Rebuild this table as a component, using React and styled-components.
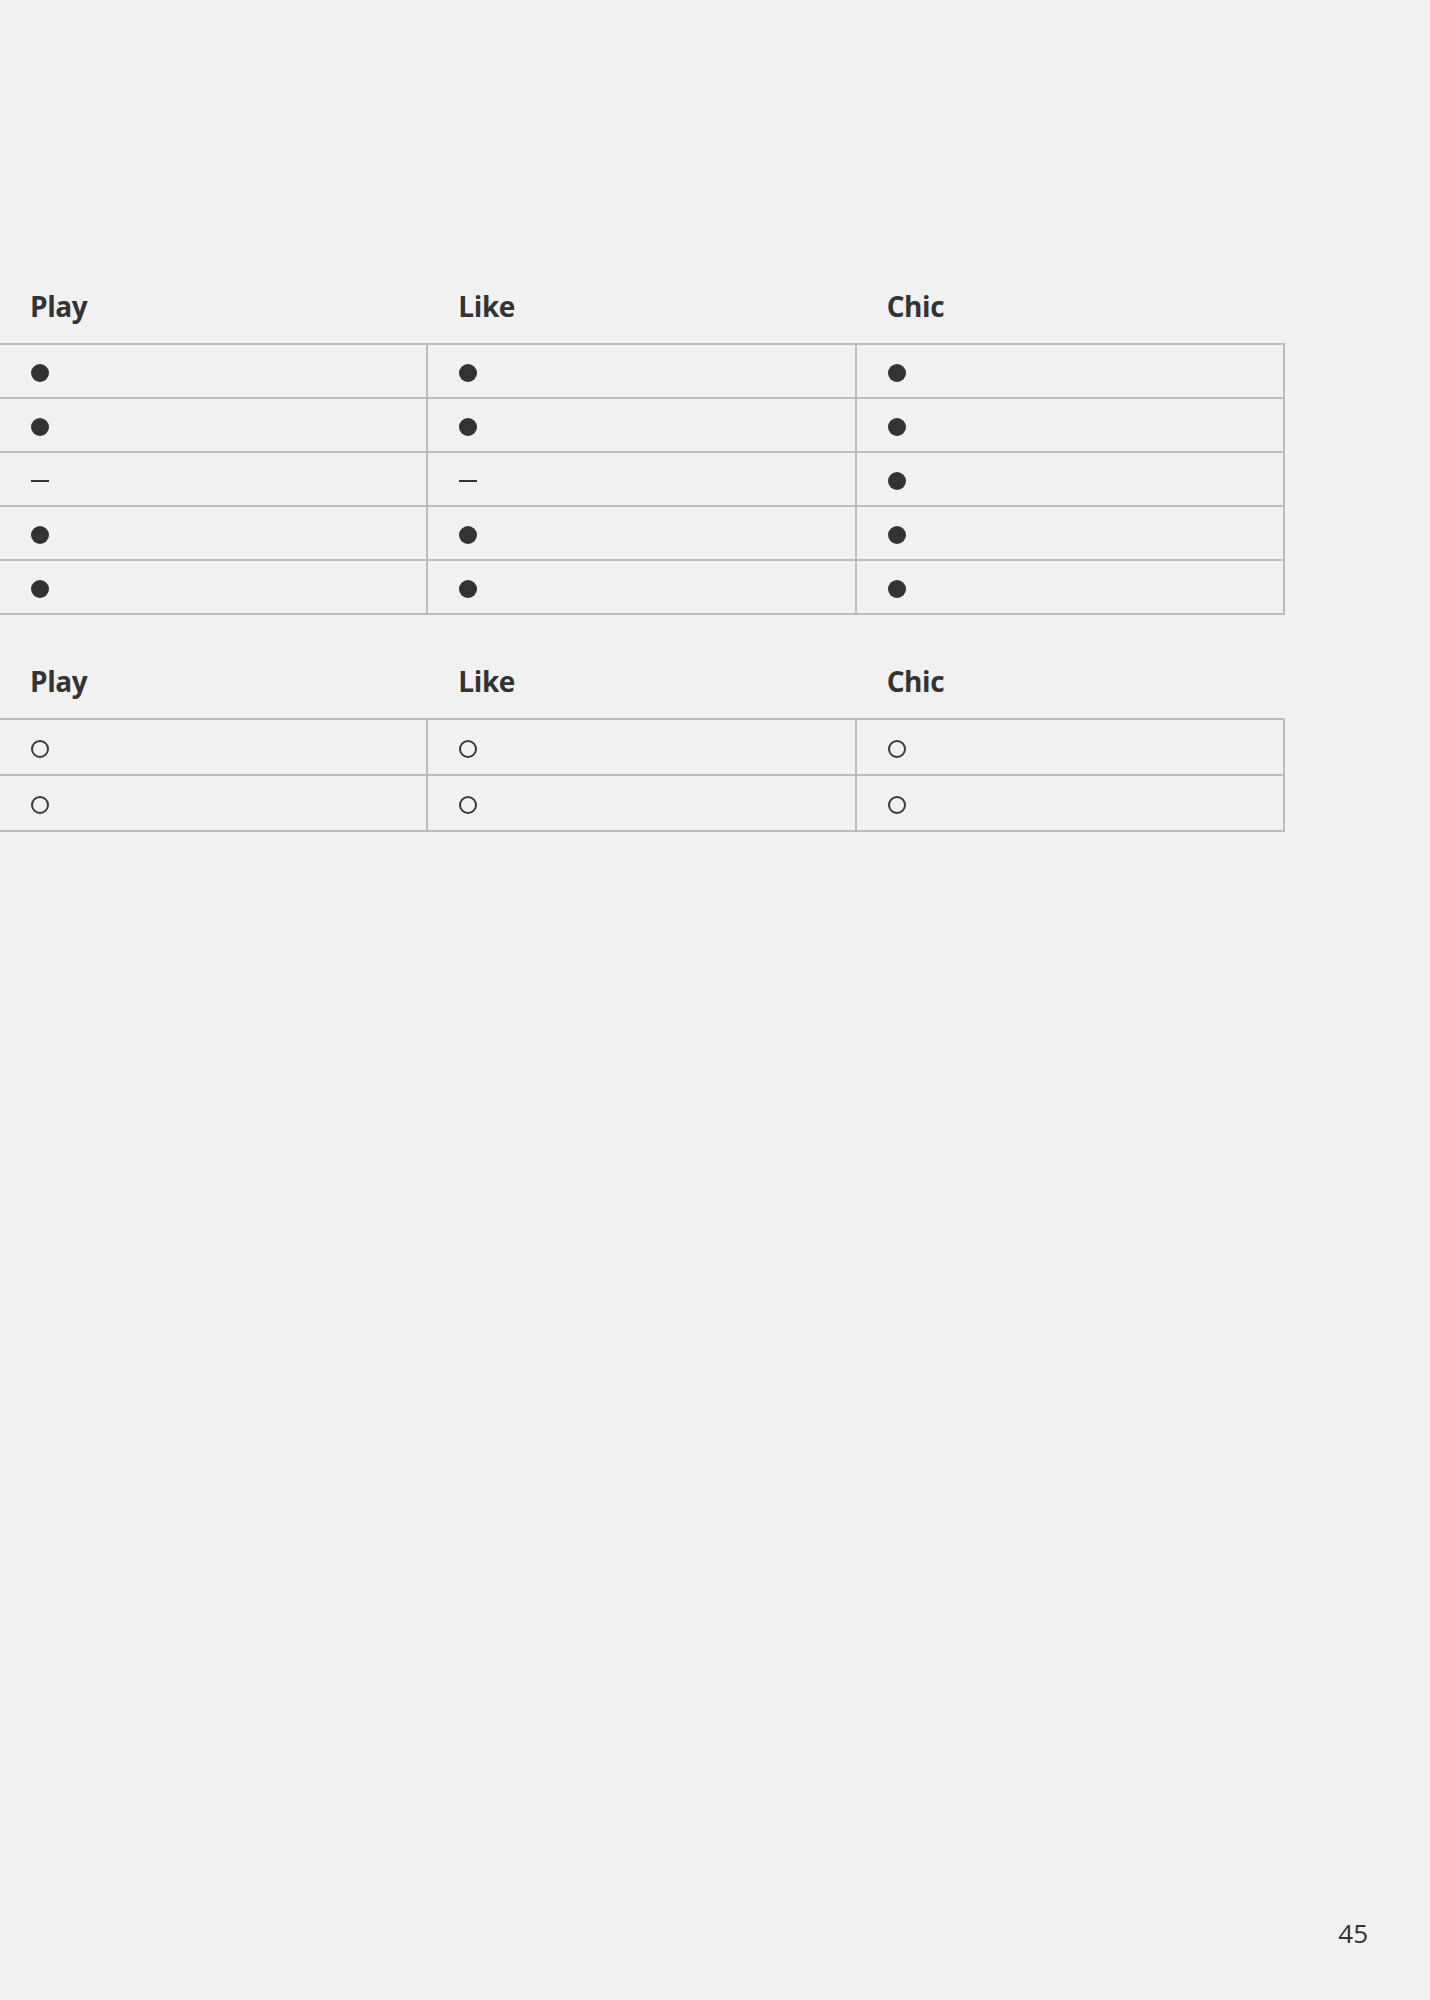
import React from 'react';
import styled, { createGlobalStyle } from 'styled-components';

const Global = createGlobalStyle`
  html, body {
    margin: 0;
    padding: 0;
    background: #f0f1f0;
  }
  body {
    font-family: "Open Sans", "Noto Sans", sans-serif;
    color: #333;
  }
`;

const Page = styled.div`
  min-height: 2000px;
  display: flex;
  flex-direction: column;
  box-sizing: border-box;
  padding-top: 283px;
`;

const Block = styled.section`
  width: 1285px;
  margin-bottom: 43px;
`;

const HeadRow = styled.div`
  display: grid;
  grid-template-columns: repeat(3, 1fr);
  height: 60px;
  box-sizing: border-box;
  padding-top: 3px;
`;

const HeadCell = styled.div`
  padding-left: 30px;
  font-size: 28px;
  font-weight: 700;
  line-height: 40px;
  letter-spacing: -0.4px;
  color: #333;
`;

const Grid = styled.div`
  border-top: 2px solid #bcbcbc;
`;

const Row = styled.div`
  display: grid;
  grid-template-columns: repeat(3, 1fr);
  height: ${p => p.h}px;
  box-sizing: border-box;
  border-bottom: 2px solid #bcbcbc;
`;

const Cell = styled.div`
  display: flex;
  align-items: center;
  padding-left: 31px;
  padding-top: 4px;
  border-right: 2px solid #bcbcbc;
`;

// dot / ring / dash marks in the cells
const Mark = styled.span`
  display: block;
  box-sizing: border-box;
  ${p => p.kind === 'dot' && `
    width: 18px; height: 18px; border-radius: 50%; background: #333;
  `}
  ${p => p.kind === 'ring' && `
    width: 18px; height: 18px; border-radius: 50%; border: 2px solid #3a3a3a;
  `}
  ${p => p.kind === 'dash' && `
    width: 18px; height: 2px; background: #333;
  `}
`;

const Footer = styled.footer`
  margin-top: auto;
  display: flex;
  justify-content: flex-end;
  padding: 0 62px 52px 0;
  font-size: 26px;
  color: #333;
  line-height: 30px;
`;

const cols = ['Play', 'Like', 'Chic'];

const first = [
  ['dot', 'dot', 'dot'],
  ['dot', 'dot', 'dot'],
  ['dash', 'dash', 'dot'],
  ['dot', 'dot', 'dot'],
  ['dot', 'dot', 'dot'],
];

const second = [
  ['ring', 'ring', 'ring'],
  ['ring', 'ring', 'ring'],
];

const Table = ({ rows, rowH }) => (
  <Block>
    <HeadRow>
      {cols.map(c => <HeadCell key={c}>{c}</HeadCell>)}
    </HeadRow>
    <Grid>
      {rows.map((r, i) => (
        <Row key={i} h={rowH}>
          {r.map((m, j) => (
            <Cell key={j}><Mark kind={m} /></Cell>
          ))}
        </Row>
      ))}
    </Grid>
  </Block>
);

export default function App() {
  return (
    <Page>
      <Global />
      <Table rows={first} rowH={54} />
      <Table rows={second} rowH={56} />
      <Footer>45</Footer>
    </Page>
  );
}
